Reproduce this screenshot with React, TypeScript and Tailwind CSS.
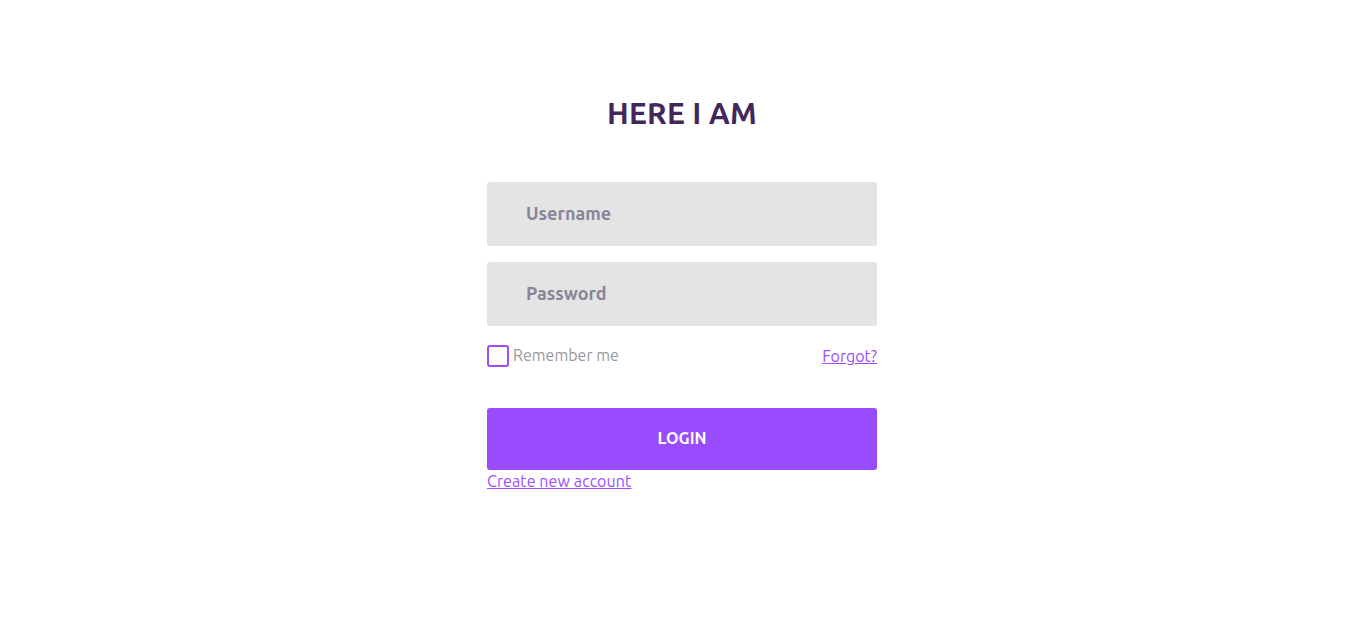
import { useState } from 'react';

const App = () => {
  const [remember, setRemember] = useState(false);

  return (
    <div className="min-h-screen bg-white flex justify-center font-['Ubuntu','Noto_Sans',sans-serif]">
      <div className="w-[390px] pt-[95px] flex flex-col">
        <h1 className="text-center text-[30px] leading-[36px] font-bold text-[#42275a] tracking-[0.2px]">
          HERE I AM
        </h1>

        <form className="mt-[51px] flex flex-col" onSubmit={(e) => e.preventDefault()}>
          <input
            type="text"
            placeholder="Username"
            className="h-16 w-full rounded-[3px] bg-[#e4e4e4] pl-[39px] pb-[2px] text-[18px] font-bold text-[#555] placeholder:text-[#8a8497] outline-none"
          />
          <input
            type="password"
            placeholder="Password"
            className="mt-4 h-16 w-full rounded-[3px] bg-[#e4e4e4] pl-[39px] pb-[2px] text-[18px] font-bold text-[#555] placeholder:text-[#8a8497] outline-none"
          />

          <div className="mt-[17px] flex items-center justify-between">
            <label className="flex items-center gap-1 cursor-pointer">
              <button
                type="button"
                onClick={() => setRemember(!remember)}
                className="w-[22px] h-[22px] rounded-[3px] border-2 border-[#9b4dff] bg-white"
              />
              <span className="text-[16px] text-[#999] pb-[2px]">Remember me</span>
            </label>
            <a href="#" className="text-[16px] text-[#9b4dff] underline">Forgot?</a>
          </div>

          <button
            type="submit"
            className="mt-[39px] h-[62px] w-full rounded-[3px] bg-[#994cff] text-white text-[16px] font-bold pb-[2px]"
          >
            LOGIN
          </button>
          <a href="#" className="self-start text-[16px] text-[#9b4dff] underline leading-[22px] tracking-[0.1px]">
            Create new account
          </a>
        </form>
      </div>
    </div>
  );
};

export default App;
